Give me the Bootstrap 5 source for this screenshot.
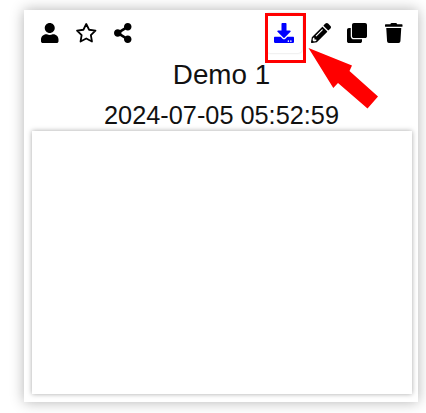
<!DOCTYPE html>
<html lang="en">
<head>
<meta charset="utf-8">
<meta name="viewport" content="width=device-width, initial-scale=1">
<title>Demo 1</title>
<link href="https://cdn.jsdelivr.net/npm/bootstrap@5.3.0/dist/css/bootstrap.min.css" rel="stylesheet">
<style>
  body { width: 426px; height: 413px; overflow: hidden; padding: 10px 8px 11px 24px; font-family: "Liberation Sans", Arial, sans-serif; color: #111; }
  .demo-card { height: 392px; padding: 0 6px 8px 7px; box-shadow: 0 0 13px rgba(0,0,0,.3); }
  .tools { height: 50px; }
  .tool { width: 36.6px; height: 40px; margin-top: 3px; padding: 0; border: 0; border-radius: 4px; color: #000; line-height: 1; }
  .tool svg { display: block; height: 20px; fill: currentColor; overflow: visible; }
  .tool.save { color: #00f; box-shadow: 0 0 2px rgba(0,0,0,.22); }
  .title { font-size: 27.8px; line-height: 32px; height: 32px; margin-top: -1px; }
  .stamp { font-size: 25.3px; line-height: 30px; height: 30px; margin-top: 9px; }
  .preview { margin: 1px 0 0 1px; box-shadow: 0 0 5px rgba(0,0,0,.35); }
  .callout { left: 265px; top: 13px; width: 41px; height: 50px; border: 3px solid #f00; }
  .arrow { left: 0; top: 0; pointer-events: none; }
</style>
</head>
<body class="bg-white position-relative">
<main class="demo-card bg-white d-flex flex-column">
  <div class="tools d-flex justify-content-between align-items-start">
    <div class="d-flex">
      <button class="tool btn d-flex align-items-center justify-content-center" aria-label="User"><svg viewBox="0 0 448 512"><path d="M224 256c70.7 0 128-57.3 128-128S294.7 0 224 0 96 57.3 96 128s57.3 128 128 128zm89.6 32h-16.7c-22.2 10.2-46.9 16-72.9 16s-50.6-5.8-72.9-16h-16.7C60.2 288 0 348.2 0 422.4V464c0 26.5 21.5 48 48 48h352c26.5 0 48-21.5 48-48v-41.6c0-74.2-60.2-134.4-134.4-134.4z"/></svg></button>
      <button class="tool btn d-flex align-items-center justify-content-center" aria-label="Favorite"><svg viewBox="0 0 576 512"><path fill="none" stroke="currentColor" stroke-width="46" stroke-linejoin="round" d="M288 26l73 147 163 24-118 115 28 162-146-77-146 77 28-162L52 197l163-24z"/></svg></button>
      <button class="tool btn d-flex align-items-center justify-content-center" aria-label="Share"><svg viewBox="0 0 448 512"><path d="M352 320c-22.608 0-43.387 7.819-59.79 20.895l-102.486-64.054a96.551 96.551 0 0 0 0-41.683l102.486-64.054C308.613 184.181 329.392 192 352 192c53.019 0 96-42.981 96-96S405.019 0 352 0s-96 42.981-96 96c0 7.158.79 14.13 2.276 20.841L155.79 180.895C139.387 167.819 118.608 160 96 160c-53.019 0-96 42.981-96 96s42.981 96 96 96c22.608 0 43.387-7.819 59.79-20.895l102.486 64.054A96.301 96.301 0 0 0 256 416c0 53.019 42.981 96 96 96s96-42.981 96-96-42.981-96-96-96z"/></svg></button>
    </div>
    <div class="d-flex">
      <button class="tool save btn d-flex align-items-center justify-content-center" aria-label="Download"><svg viewBox="0 0 512 512"><path d="M216 0h80c13.3 0 24 10.7 24 24v168h87.7c17.8 0 26.7 21.5 14.1 34.1L269.7 378.3c-7.5 7.5-19.8 7.5-27.3 0L90.1 226.1c-12.6-12.6-3.7-34.1 14.1-34.1H192V24c0-13.3 10.7-24 24-24zm296 376v112c0 13.3-10.7 24-24 24H24c-13.3 0-24-10.7-24-24V376c0-13.3 10.7-24 24-24h146.7l49 49c20.1 20.1 52.5 20.1 72.6 0l49-49H488c13.3 0 24 10.7 24 24zm-124 88c0-11-9-20-20-20s-20 9-20 20 9 20 20 20 20-9 20-20zm64 0c0-11-9-20-20-20s-20 9-20 20 9 20 20 20 20-9 20-20z"/></svg></button>
      <button class="tool btn d-flex align-items-center justify-content-center" aria-label="Edit"><svg viewBox="0 0 512 512"><path d="M497.9 142.1l-46.1 46.1c-4.7 4.7-12.3 4.7-17 0l-111-111c-4.7-4.7-4.7-12.3 0-17l46.1-46.1c18.7-18.7 49.1-18.7 67.9 0l60.1 60.1c18.8 18.7 18.8 49.1 0 67.9zM284.2 99.8L21.6 362.4.4 483.9c-2.9 16.4 11.4 30.6 27.8 27.8l121.5-21.3 262.6-262.6c4.7-4.7 4.7-12.3 0-17l-111-111c-4.8-4.7-12.4-4.7-17.1 0zM124.1 339.9c-5.5-5.5-5.5-14.3 0-19.8l154-154c5.5-5.5 14.3-5.5 19.8 0s5.5 14.3 0 19.8l-154 154c-5.5 5.5-14.3 5.5-19.8 0zM88 424h48v36.3l-64.5 11.3-31.1-31.1L51.7 376H88v48z"/></svg></button>
      <button class="tool btn d-flex align-items-center justify-content-center" aria-label="Duplicate"><svg viewBox="0 0 512 512"><path d="M464 0c26.51 0 48 21.49 48 48v288c0 26.51-21.49 48-48 48H176c-26.51 0-48-21.49-48-48V48c0-26.51 21.49-48 48-48h288M176 416c-44.112 0-80-35.888-80-80V128H48c-26.51 0-48 21.49-48 48v288c0 26.51 21.49 48 48 48h288c26.51 0 48-21.49 48-48v-48H176z"/></svg></button>
      <button class="tool btn d-flex align-items-center justify-content-center" aria-label="Delete"><svg viewBox="0 0 448 512"><path d="M432 32H312l-9.4-18.7A24 24 0 0 0 281.1 0H166.8a23.72 23.72 0 0 0-21.4 13.3L136 32H16A16 16 0 0 0 0 48v32a16 16 0 0 0 16 16h416a16 16 0 0 0 16-16V48a16 16 0 0 0-16-16zM53.2 467a48 48 0 0 0 47.9 45h245.8a48 48 0 0 0 47.9-45L416 128H32z"/></svg></button>
    </div>
  </div>
  <div class="title text-center">Demo 1</div>
  <div class="stamp text-center">2024-07-05 05:52:59</div>
  <div class="preview bg-white flex-grow-1"></div>
</main>
<div class="callout position-absolute"></div>
<svg class="arrow position-absolute" width="426" height="413" viewBox="0 0 426 413"><path fill="#f00" d="M308.5 48L352 65.5L349.5 71L378 96.5L367.5 108.5L338 83L333.3 88z"/></svg>
</body>
</html>
